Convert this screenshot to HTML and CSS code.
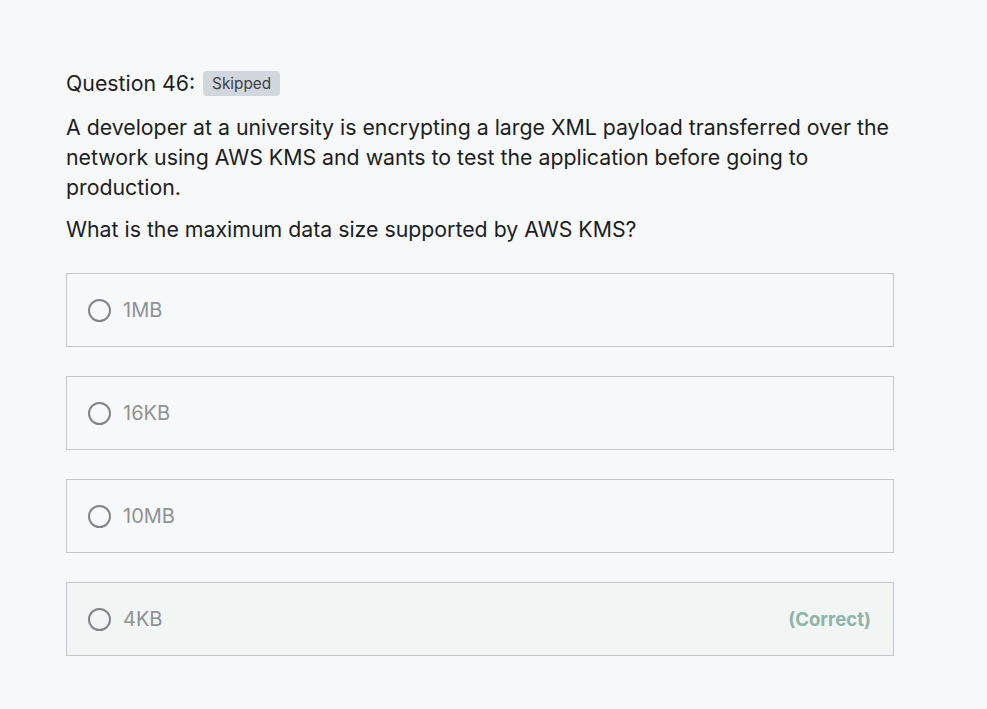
FILE: index.html
```html
<!DOCTYPE html>
<html>
<head>
<meta charset="utf-8">
<link rel="stylesheet" href="styles.css">
</head>
<body>
<main class="page">
  <div class="question-head">
    <span class="q-title">Question 46:</span>
    <span class="badge">Skipped</span>
  </div>
  <p class="q-text">A developer at a university is encrypting a large XML payload transferred over the network using AWS KMS and wants to test the application before going to production.</p>
  <p class="q-text q-ask">What is the maximum data size supported by AWS KMS?</p>
  <div class="options">
    <div class="option"><span class="radio"></span><span class="label">1MB</span></div>
    <div class="option"><span class="radio"></span><span class="label">16KB</span></div>
    <div class="option"><span class="radio"></span><span class="label">10MB</span></div>
    <div class="option correct"><span class="radio"></span><span class="label">4KB</span><span class="tag">(Correct)</span></div>
  </div>
</main>
</body>
</html>
```

FILE: styles.css
```css
html, body {
  margin: 0;
  padding: 0;
  background: #f7f8fa;
}
body {
  font-family: Inter, "Noto Sans", sans-serif;
  color: #1c1d1f;
}
.page {
  padding: 68px 0 0 66px;
  width: 828px;
}
.question-head {
  display: flex;
  align-items: center;
  gap: 8px;
  height: 30px;
}
.q-title {
  font-size: 21.3px;
  color: #1c1d1f;
}
.badge {
  background: #d1d7dc;
  color: #3d4047;
  font-size: 15.3px;
  padding: 0 9px;
  height: 25px;
  line-height: 25px;
  border-radius: 4px;
}
.q-text {
  margin: 14px 0 0;
  font-size: 21.3px;
  line-height: 30px;
}
.q-ask {
  margin-top: 12px;
}
.options {
  margin-top: 29px;
  display: flex;
  flex-direction: column;
  gap: 29px;
}
.option {
  height: 74px;
  box-sizing: border-box;
  border: 1px solid #c4c6c9;
  display: flex;
  align-items: center;
  padding: 0 22px 0 21px;
  background: #f7f8fa;
}
.option.correct {
  background: #f1f5f4;
}
.radio {
  width: 19px;
  height: 19px;
  border: 2.5px solid #828488;
  border-radius: 50%;
  flex: none;
}
.label {
  margin-left: 12px;
  font-size: 20px;
  color: #8f9195;
}
.tag {
  margin-left: auto;
  font-size: 18.6px;
  font-weight: 700;
  color: #8fb3aa;
}
```
